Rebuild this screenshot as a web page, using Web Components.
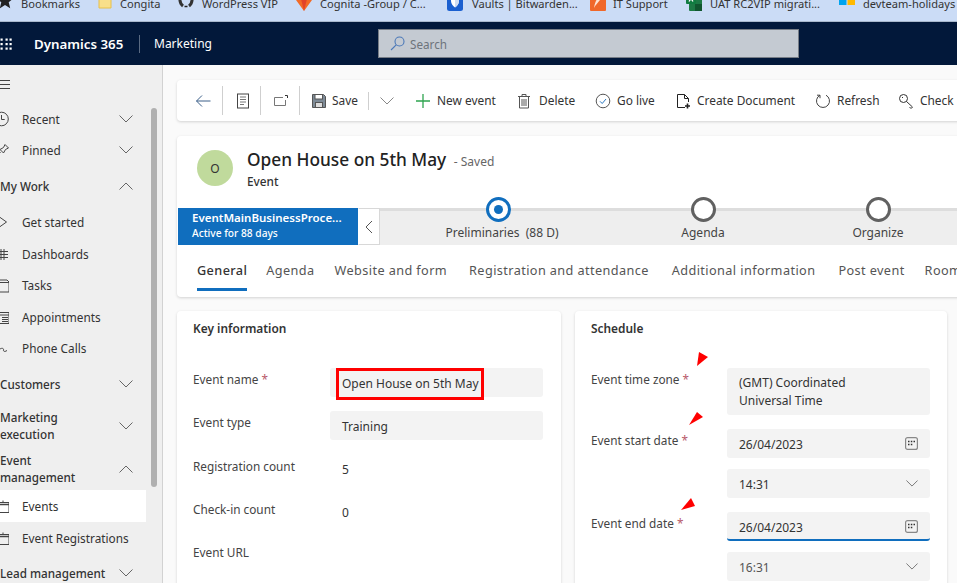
<!DOCTYPE html>
<html lang="en">
<head>
<meta charset="utf-8">
<title>Open House on 5th May</title>
<style>
  html, body { margin: 0; height: 100%; }
  body {
    width: 957px; height: 583px; overflow: hidden;
    font-family: "Noto Sans", "Open Sans", sans-serif; font-size: 12.5px; color: #333;
    display: flex; flex-direction: column; background: #fafafa;
  }
  .workspace { display: flex; flex: 1; min-height: 0; }
  main {
    flex: 1; min-width: 0; display: flex; flex-direction: column; gap: 15px;
    padding: 15px 0 0 14px; overflow: hidden;
  }
  .cards { display: grid; grid-template-columns: 384px 372px; gap: 14px; margin-top: -1px; }
</style>
</head>
<body>
  <bookmarks-bar></bookmarks-bar>
  <app-header></app-header>
  <div class="workspace">
    <side-nav>
      <nav-item icon="clock" chevron="down">Recent</nav-item>
      <nav-item icon="pin" chevron="down">Pinned</nav-item>
      <nav-item group chevron="up">My Work</nav-item>
      <nav-item icon="play">Get started</nav-item>
      <nav-item icon="dash">Dashboards</nav-item>
      <nav-item icon="task">Tasks</nav-item>
      <nav-item icon="appt">Appointments</nav-item>
      <nav-item icon="phone">Phone Calls</nav-item>
      <nav-item group chevron="down">Customers</nav-item>
      <nav-item group tall chevron="down">Marketing<br>execution</nav-item>
      <nav-item group tall chevron="up">Event<br>management</nav-item>
      <nav-item icon="event" selected>Events</nav-item>
      <nav-item icon="event">Event Registrations</nav-item>
      <nav-item group chevron="down">Lead management</nav-item>
    </side-nav>
    <main>
      <command-bar></command-bar>
      <form-header></form-header>
      <div class="cards">
        <form-card heading="Key information" style="--field-gap:14.250px;--label-w:137px;--field-mr:2px">
          <form-field label="Event name" required>
            <field-box marked>Open House on 5th May</field-box>
          </form-field>
          <form-field label="Event type"><field-box>Training</field-box></form-field>
          <form-field label="Registration count"><field-box plain>5</field-box></form-field>
          <form-field label="Check-in count"><field-box plain>0</field-box></form-field>
          <form-field label="Event URL"><field-box plain></field-box></form-field>
        </form-card>
        <form-card heading="Schedule" arrows style="--field-gap:14px;--label-w:136px;--field-mr:1px">
          <form-field label="Event time zone" required>
            <field-box tall>(GMT) Coordinated<br>Universal Time</field-box>
          </form-field>
          <form-field label="Event start date" required>
            <field-box trail="calendar">26/04/2023</field-box>
            <field-box trail="chevron">14:31</field-box>
          </form-field>
          <form-field label="Event end date" required>
            <field-box trail="calendar" focused>26/04/2023</field-box>
            <field-box trail="chevron" muted>16:31</field-box>
          </form-field>
        </form-card>
      </div>
    </main>
  </div>

<script>
const NAV_ICONS = {
  clock: '<circle cx="8.5" cy="8" r="6.8"/><path d="M8.5 4v4.5h3.2"/>',
  pin: '<path d="M12 2.5l3.5 3.5-3 1.5-2 3.5-3.5-3.5 3.5-2z"/><path d="M7.5 10L5 13"/>',
  play: '<path d="M6.5 3l7 5-7 5"/>',
  dash: '<path d="M8 3v11M11 3v11M7 5.5h8M7 8.5h8M7 11.5h8"/>',
  task: '<path d="M7 3h7l2 2v10H7"/><path d="M7 5.5h9"/>',
  appt: '<path d="M7 3.5h9v11H7"/><path d="M7 6h9M9 8.5h6M9 10.5h6M9 12.5h6"/>',
  phone: '<path d="M6 10c2-2.500 5-2 4.500 0-.4 1.500 1.500 2 3.500 .5"/>',
  event: '<path d="M7 4.500h9v10H7"/><path d="M7 6.500h9" stroke-width="1.500"/><path d="M10 2.500v2"/>'
};

const CMD_ICONS = {
  back: '<path d="M15.500 8H1.500M7 2.500L1.500 8 7 13.500" stroke="#3b5f88"/>',
  doc: '<rect x="2.500" y="1" width="11" height="14" stroke="#444"/><path d="M5 4h6M5 6.500h6M5 9h6M5 11.500h4" stroke="#777"/>',
  popout: '<path d="M12.500 7v5.500H1.500v-8H10" stroke="#777"/><path d="M12 2.500h2.500V5" stroke="#333"/>',
  save: '<path d="M1.500 1.500h11l2 2v11h-13z" fill="#7d8a96" stroke="#555"/><rect x="4" y="1.500" width="7.500" height="4.500" fill="#fff" stroke="#555"/><rect x="4.500" y="9.500" width="7" height="5" fill="#ddd" stroke="#555"/>',
  plus: '<path d="M8 1v14M1 8h14" stroke="#2ea44f" stroke-width="1.300"/>',
  trash: '<path d="M2.500 4v11h9V4M1 3.500h12M5 3V1.500h4V3M5 6v7M7 6v7M9 6v7" stroke="#555"/>',
  live: '<circle cx="8" cy="8" r="6.800" stroke="#555"/><path d="M5 8.300l2.200 2.200L11 6" stroke="#2b79c2"/>',
  createdoc: '<path d="M10 14.500H2.500v-13h7l4 4V9M9.500 1.500v4h4" stroke="#222"/><path d="M12.500 10.500v5M10 13h5" stroke="#222" stroke-width="1.600"/>',
  refresh: '<path d="M5 2.200A6.500 6.500 0 1 0 11 2.200M5 2.200v3M5 2.200H2" stroke="#444"/>',
  key: '<circle cx="5.500" cy="5.500" r="4" stroke="#333"/><path d="M8.500 8.500l6 5.500-1.500 1.500-1.500-1.500M4 4.500h1" stroke="#333"/>'
};

const chevronSvg = (dir, color = '#666') => `<svg width="14" height="8" viewBox="0 0 14 8" fill="none" stroke="${color}"><path d="${dir === 'up' ? 'M.5 7.500l6.500-6.500 6.500 6.500' : 'M.5 .5l6.500 6.500 6.500-6.500'}"/></svg>`;

class BookmarksBar extends HTMLElement {
  connectedCallback() {
    const items = [
      [101, 'Bookmarks', '<path d="M8 -3l2.400 6 6 .4-4.700 3.900 1.500 6L8 10l-5.200 3.300 1.500-6L-.4 3.400l6-.4z" fill="#222"/>', 8],
      [80, 'Congita', '<path d="M1 -2h9l3 3v12H1z" fill="#f8df8a" stroke="#e8c04a"/>', 6],
      [118, 'WordPress VIP', '<path d="M4 -2C1 1 1 8 5 11M12 -2c3 3 3 10-1 13" fill="none" stroke="#333" stroke-width="3"/><path d="M6.500 11.500h3" stroke="#222" stroke-width="1.500"/>', 8],
      [151, 'Cognita -Group / C...', '<path d="M8 16L0 5 2.500 -2 5 4h6l2.500-6L16 5z" fill="#f26a26"/><path d="M8 16L5 4h6z" fill="#e24329"/>', 8],
      [143, 'Vaults | Bitwarden...', '<rect y="-4" width="16" height="20" rx="2.500" fill="#1a5fd0"/><path d="M4 -2h8v8c0 3-2 5-4 6.500C6 11 4 9 4 6z" fill="#fff"/><path d="M8 -2h4v8c0 3-2 5-4 6.500z" fill="#cfdcf2"/>', 9],
      [96, 'IT Support', '<rect y="-4" width="16" height="20" rx="1" fill="#f0682a"/><path d="M14 -1C9 0 5 5 4 13 6 9 10 6 14 -1z" fill="#fde3d2"/>', 7],
      [153, 'UAT RC2VIP migrati...', '<rect x="3" y="-4" width="13" height="20" rx="1" fill="#1c7a45"/><rect x="9" y="-4" width="7" height="8" fill="#37a76b"/><rect x="9" y="9" width="7" height="7" fill="#10562f"/><rect y="-2" width="10" height="11" rx="1" fill="#107c41"/><path d="M3 .5l4 6M7 .5l-4 6" stroke="#fff" stroke-width="1.300"/>', 8],
      [120, 'devteam-holidays', '<rect y="-4" width="7.500" height="6.500" fill="#f25022"/><rect x="8.500" y="-4" width="7.500" height="6.500" fill="#7fba00"/><rect y="3.500" width="7.500" height="6.500" fill="#00a4ef"/><rect x="8.500" y="3.500" width="7.500" height="6.500" fill="#ffb900"/>', 8]
    ];
    this.attachShadow({ mode: 'open' }).innerHTML = `
      <style>
        :host { display: flex; flex: none; height: 21px; background: #cbdcf6; border-bottom: 1px solid #a9b8cc; overflow: hidden; margin-left: -3px; color: #333; font-size: 11.100px; }
        .item { flex: none; display: flex; align-items: center; height: 16px; margin-top: -5px; white-space: nowrap; }
        svg { flex: none; overflow: visible; }
      </style>
      ${items.map(([w, text, icon, gap]) => `
        <div class="item" style="width:${w}px">
          <svg width="16" height="16" viewBox="0 0 16 16">${icon}</svg>
          <span style="margin-left:${gap}px">${text}</span>
        </div>`).join('')}`;
  }
}

class AppHeader extends HTMLElement {
  connectedCallback() {
    const dots = [1.5, 6.5, 10.5].flatMap(x => [1.5, 6, 10.5].map(y => `<rect x="${x - 1}" y="${y - 1}" width="2.200" height="2.200"/>`)).join('');
    this.attachShadow({ mode: 'open' }).innerHTML = `
      <style>
        :host { display: flex; flex: none; align-items: center; height: 43px; background: #02183a; color: #fff; font-size: 12px; }
        .waffle { flex: none; width: 34px; height: 12px; fill: #fff; }
        .brand { font-weight: 600; font-size: 13.300px; width: 105px; white-space: nowrap; }
        .divider { width: 1px; height: 18px; background: #5a6a82; }
        .app { width: 238px; padding-left: 14px; box-sizing: border-box; white-space: nowrap; }
        .search { flex: none; display: flex; align-items: center; box-sizing: border-box; width: 421px; height: 29px; padding-left: 11px; gap: 5px; background: #c4cad2; border: 1px solid #777d86; color: #6d737b; font-size: 11.700px; }
        .search svg { flex: none; }
      </style>
      <svg class="waffle" viewBox="0 0 34 12">${dots}</svg>
      <div class="brand">Dynamics 365</div>
      <div class="divider"></div>
      <div class="app">Marketing</div>
      <div class="search">
        <svg width="15" height="15" viewBox="0 0 15 15" fill="none" stroke="#4a78b8" stroke-width="1.100"><circle cx="9.500" cy="5.500" r="4.500"/><path d="M6.200 8.800L1 14"/></svg>
        <span>Search</span>
      </div>`;
  }
}

class SideNav extends HTMLElement {
  connectedCallback() {
    this.attachShadow({ mode: 'open' }).innerHTML = `
      <style>
        :host { display: block; position: relative; flex: none; width: 162px; background: #efefef; border-right: 1px solid #d2d2d2; overflow: hidden; }
        .burger { display: flex; align-items: center; height: 38px; }
        .list { width: 146px; }
        .thumb { position: absolute; left: 151px; top: 43px; width: 6px; height: 379px; border-radius: 3px; background: #b0b0b0; }
      </style>
      <div class="burger">
        <svg width="10" height="9" viewBox="0 0 10 9" stroke="#444"><path d="M0 .5h10M0 4.500h10M0 8.500h10"/></svg>
      </div>
      <div class="list"><slot></slot></div>
      <div class="thumb"></div>`;
  }
}

class NavItem extends HTMLElement {
  connectedCallback() {
    const icon = this.getAttribute('icon');
    const chevron = this.getAttribute('chevron');
    this.attachShadow({ mode: 'open' }).innerHTML = `
      <style>
        :host { display: flex; align-items: center; height: 31.600px; font-size: 11.800px; color: #333; white-space: nowrap; }
        :host([group]) { height: 40px; font-size: 11.700px; font-weight: 500; line-height: 17px; }
        :host([tall]) { height: 43px; }
        :host([selected]) { background: #fff; }
        svg.icon { flex: none; width: 16px; height: 16px; margin: 0 13px 0 -7px; fill: none; stroke: #444; }
        .label { flex: 1; padding-top: 0; }
        .chev { flex: none; display: flex; margin-right: 13px; }
      </style>
      ${icon ? `<svg class="icon" viewBox="0 0 16 16">${NAV_ICONS[icon]}</svg>` : ''}
      <div class="label"><slot></slot></div>
      ${chevron ? `<div class="chev">${chevronSvg(chevron)}</div>` : ''}`;
  }
}

class CommandBar extends HTMLElement {
  connectedCallback() {
    const btn = (icon, text, w, gap = 6) => `
      <div class="btn" style="width:${w}px">
        <svg class="${text ? 'lead' : ''}" width="16" height="16" viewBox="0 0 16 16" fill="none">${CMD_ICONS[icon]}</svg>
        ${text ? `<span style="margin-left:${gap}px">${text}</span>` : ''}
      </div>`;
    this.attachShadow({ mode: 'open' }).innerHTML = `
      <style>
        :host { display: flex; flex: none; align-items: center; height: 41px; width: 800px; padding-left: 18px; box-sizing: border-box; background: #fff; border-radius: 4px 0 0 4px; box-shadow: 0 1px 3px rgba(0,0,0,.16); font-size: 11.900px; color: #333; white-space: nowrap; overflow: hidden; }
        .btn { flex: none; display: flex; align-items: center; }
        .btn span { padding-bottom: 2px; }
        .sep { flex: none; width: 1px; height: 29px; background: #cfcfcf; }
        .sep.short { height: 18px; }
        svg { flex: none; }
        svg.lead { margin-left: -1px; }
      </style>
      ${btn('back', '', 27)}<div class="sep"></div>
      <div style="width:12px"></div>${btn('doc', '', 25)}<div class="sep"></div>
      <div style="width:12px"></div>${btn('popout', '', 26)}<div class="sep"></div>
      <div style="width:12px"></div>${btn('save', 'Save', 56, 5)}<div class="sep short"></div>
      <div style="width:11px;flex:none"></div><div class="btn" style="width:36px">${chevronSvg('down', '#888')}</div>
      ${btn('plus', 'New event', 102)}
      ${btn('trash', 'Delete', 78)}
      ${btn('live', 'Go live', 80)}
      ${btn('createdoc', 'Create Document', 140)}
      ${btn('refresh', 'Refresh', 83)}
      ${btn('key', 'Check', 60)}`;
  }
}

class ProcessStage extends HTMLElement {
  connectedCallback() {
    this.attachShadow({ mode: 'open' }).innerHTML = `
      <style>
        :host { display: flex; flex: none; flex-direction: column; align-items: center; margin-top: -14.500px; font-size: 12px; color: #444; white-space: nowrap; }
        .ring { flex: none; box-sizing: border-box; width: 25px; height: 25px; border-radius: 50%; border: 3px solid #616161; background: #fff; display: flex; align-items: center; justify-content: center; margin-bottom: 2px; }
        :host([active]) .ring { border-color: #106ebe; }
        :host([active]) .ring::after { content: ""; width: 9px; height: 9px; border-radius: 50%; background: #106ebe; }
        :host([active]) .text { margin-left: 8px; }
      </style>
      <div class="ring"></div>
      <div class="text"><slot></slot></div>`;
  }
}

class FormHeader extends HTMLElement {
  connectedCallback() {
    this.attachShadow({ mode: 'open' }).innerHTML = `
      <style>
        :host { display: block; flex: none; width: 800px; height: 161px; background: #fff; border-radius: 4px 0 0 4px; box-shadow: 0 1px 3px rgba(0,0,0,.16); overflow: hidden; }
        .title-row { display: flex; align-items: flex-start; height: 72px; box-sizing: border-box; padding: 14px 0 0 20px; }
        .avatar { flex: none; width: 36px; height: 36px; border-radius: 50%; background: #c0da9c; display: flex; align-items: center; justify-content: center; font-size: 12px; color: #333; margin-right: 14px; }
        .name { font-size: 17.300px; font-weight: 500; color: #222; white-space: nowrap; line-height: 22px; margin-top: -1px; }
        .saved { font-size: 12px; font-weight: 400; color: #666; margin-left: 3px; }
        .type { font-size: 11.800px; font-weight: 500; color: #333; line-height: 18px; margin-top: -1px; }
        .process { display: flex; height: 37px; margin-left: 1px; }
        .flag { flex: none; box-sizing: border-box; width: 180px; padding: 2px 0 0 14px; background: #106ebe; color: #fff; font-size: 10.200px; font-weight: 500; line-height: 15px; white-space: nowrap; }
        .flag b { display: block; font-weight: 600; font-size: 11.500px; line-height: 16px; }
        .collapse { flex: none; box-sizing: border-box; width: 22px; border: 1px solid #d8d8d8; border-left-color: #fff; display: flex; align-items: center; justify-content: center; }
        .stages { flex: 1; display: flex; background: #eee; border-top: 3px solid #ddd; box-sizing: border-box; padding-left: 58px; }
        .tabs { display: flex; gap: 20px; height: 52px; padding-left: 20px; font-size: 12.700px; letter-spacing: .4px; color: #555; white-space: nowrap; }
        .tab { height: 46px; line-height: 50px; box-sizing: border-box; }
        .tab.on { color: #333; font-weight: 500; border-bottom: 3px solid #106ebe; margin-right: -1px; }
      </style>
      <div class="title-row">
        <div class="avatar">O</div>
        <div>
          <div class="name">Open House on 5th May <span class="saved">- Saved</span></div>
          <div class="type">Event</div>
        </div>
      </div>
      <div class="process">
        <div class="flag"><b>EventMainBusinessProce...</b>Active for 88 days</div>
        <div class="collapse"><svg width="8" height="14" viewBox="0 0 8 14" fill="none" stroke="#555"><path d="M7 1L1 7l6 6"/></svg></div>
        <div class="stages">
          <process-stage active style="width:120px">Preliminaries&nbsp; (88 D)</process-stage>
          <process-stage style="width:50px;margin-left:120px">Agenda</process-stage>
          <process-stage style="width:50px;margin-left:125px">Organize</process-stage>
        </div>
      </div>
      <div class="tabs">
        <div class="tab on">General</div>
        <div class="tab">Agenda</div>
        <div class="tab">Website and form</div>
        <div class="tab" style="margin-left:2px">Registration and attendance</div>
        <div class="tab" style="margin-left:3px">Additional information</div>
        <div class="tab" style="margin-left:3px">Post event</div>
        <div class="tab">Room</div>
      </div>`;
  }
}

class FormCard extends HTMLElement {
  connectedCallback() {
    const arrows = this.hasAttribute('arrows') ? `
      <svg class="marks" width="372" height="272" viewBox="0 0 372 272" fill="#f00">
        <polygon points="124,41 133,46 122,55"/>
        <polygon points="122,101 128,106 114,114"/>
        <polygon points="116,187 120,195 106,199"/>
      </svg>` : '';
    this.attachShadow({ mode: 'open' }).innerHTML = `
      <style>
        :host { display: block; position: relative; background: #fff; border-radius: 4px 4px 0 0; box-shadow: 0 1px 3px rgba(0,0,0,.16); height: 290px; padding: 0 16px; box-sizing: border-box; }
        h3 { margin: 0; height: 57px; padding-top: 8px; box-sizing: border-box; font-size: 11.900px; font-weight: 600; line-height: 18px; color: #333; }
        .fields { display: flex; flex-direction: column; gap: var(--field-gap, 14px); }
        .marks { position: absolute; left: 0; top: 0; pointer-events: none; }
      </style>
      <h3>${this.getAttribute('heading')}</h3>
      <div class="fields"><slot></slot></div>
      ${arrows}`;
  }
}

class FormField extends HTMLElement {
  connectedCallback() {
    const star = this.hasAttribute('required') ? ' <span class="req">*</span>' : '';
    this.attachShadow({ mode: 'open' }).innerHTML = `
      <style>
        :host { display: grid; grid-template-columns: var(--label-w, 137px) 1fr; margin-right: var(--field-mr, 2px); font-size: 11.800px; }
        .label { color: #444; line-height: 16px; padding-top: 3px; white-space: nowrap; }
        .req { color: #b85a6a; }
        .controls { display: flex; flex-direction: column; gap: 11px; min-width: 0; }
      </style>
      <div class="label">${this.getAttribute('label')}${star}</div>
      <div class="controls"><slot></slot></div>`;
  }
}

class FieldBox extends HTMLElement {
  connectedCallback() {
    const trail = this.getAttribute('trail');
    const calendar = '<svg width="13" height="13" viewBox="0 0 13 13" fill="none" stroke="#888" stroke-width="1.200"><rect x=".6" y=".6" width="11.800" height="11.800" rx="2"/><path d="M3 4.500h1.500M5.800 4.500h1.500M8.500 4.500H10M3 7.500h1.500M5.800 7.500h1.500" stroke="#333" stroke-width="1.300"/></svg>';
    const mark = this.hasAttribute('marked') ? '<div class="mark"></div>' : '';
    this.attachShadow({ mode: 'open' }).innerHTML = `
      <style>
        :host { display: flex; align-items: center; position: relative; box-sizing: border-box; height: 29px; padding: 0 12px; background: #f3f3f3; border-radius: 3px; font-size: 12px; color: #333; line-height: 18px; white-space: nowrap; }
        :host([tall]) { height: 47px; }
        :host([plain]) { background: none; }
        :host([muted]) { color: #555; }
        :host([focused]) { border-bottom: 2px solid #106ebe; padding-top: 2px; }
        .text { flex: 1; padding-top: 2px; }
        :host([tall]) .text { padding-top: 0; }
        .trail { flex: none; display: flex; }
        .trail svg[height="8"] { width: 12px; height: 7px; }
        .mark { position: absolute; left: 6px; top: 0; width: 148px; height: 32px; box-sizing: border-box; border: 3px solid #f00; }
      </style>
      <div class="text"><slot></slot></div>
      ${trail ? `<div class="trail">${trail === 'calendar' ? calendar : chevronSvg('down', '#666')}</div>` : ''}
      ${mark}`;
  }
}

customElements.define('bookmarks-bar', BookmarksBar);
customElements.define('app-header', AppHeader);
customElements.define('side-nav', SideNav);
customElements.define('nav-item', NavItem);
customElements.define('command-bar', CommandBar);
customElements.define('process-stage', ProcessStage);
customElements.define('form-header', FormHeader);
customElements.define('form-card', FormCard);
customElements.define('form-field', FormField);
customElements.define('field-box', FieldBox);
</script>
</body>
</html>
